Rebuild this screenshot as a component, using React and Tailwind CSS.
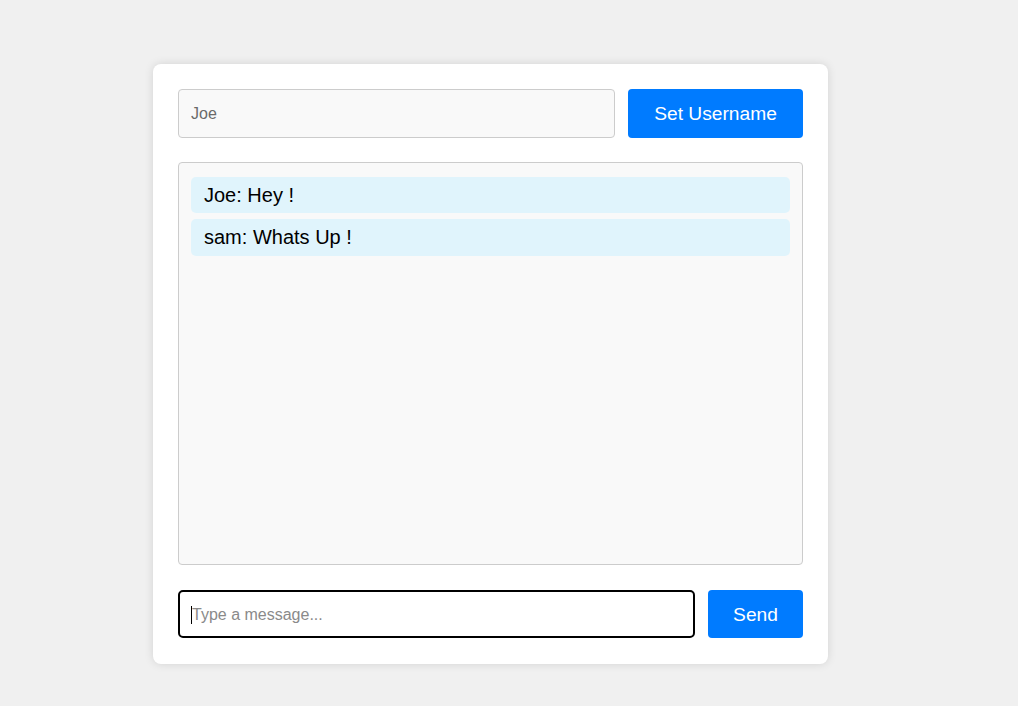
export default function App() {
  const font = { fontFamily: '"Liberation Sans", Arial, sans-serif' };
  return (
    <div className="min-h-[706px] w-full bg-[#f0f0f0] pt-[64px] pl-[153px]" style={font}>
      <div className="w-[675px] h-[600px] bg-white rounded-[8px] shadow-[0_0_10px_rgba(0,0,0,0.12)] p-[25px] flex flex-col">
        <div className="flex gap-[13px] h-[49px]">
          <input
            defaultValue="Joe"
            className="flex-1 h-[49px] border border-[#cccccc] bg-[#f9f9f9] rounded-[4px] px-[12px] text-[16px] text-[#6a6a6a] outline-none"
            style={font}
          />
          <button className="w-[175px] h-[49px] pt-[2px] bg-[#007bff] text-white rounded-[4px] text-[19.2px]" style={font}>
            Set Username
          </button>
        </div>
        <div className="mt-[24px] h-[403px] border border-[#cccccc] bg-[#f9f9f9] rounded-[4px] pt-[14px] px-[12px] flex flex-col gap-[6px]">
          <div className="bg-[#e0f4fc] rounded-[5px] py-[6px] px-[13px] text-[20px] text-black leading-[24px]">Joe: Hey !</div>
          <div className="bg-[#e0f4fc] rounded-[5px] py-[6px] px-[13px] text-[20px] text-black leading-[25px]">sam: Whats Up !</div>
        </div>
        <div className="mt-[25px] flex gap-[13px] h-[48px]">
          <div className="relative flex-1 h-[48px]">
            <input
              placeholder="Type a message..."
              className="w-full h-[48px] pt-[2px] border-2 border-black bg-white rounded-[5px] px-[12px] text-[16px] text-black placeholder:text-[#8a8a8a] outline-none"
              style={font}
            />
            <span className="absolute left-[13px] top-[16px] w-[1px] h-[18px] bg-black" />
          </div>
          <button className="w-[95px] h-[48px] pt-[2px] bg-[#007bff] text-white rounded-[4px] text-[19.2px]" style={font}>
            Send
          </button>
        </div>
      </div>
    </div>
  );
}
